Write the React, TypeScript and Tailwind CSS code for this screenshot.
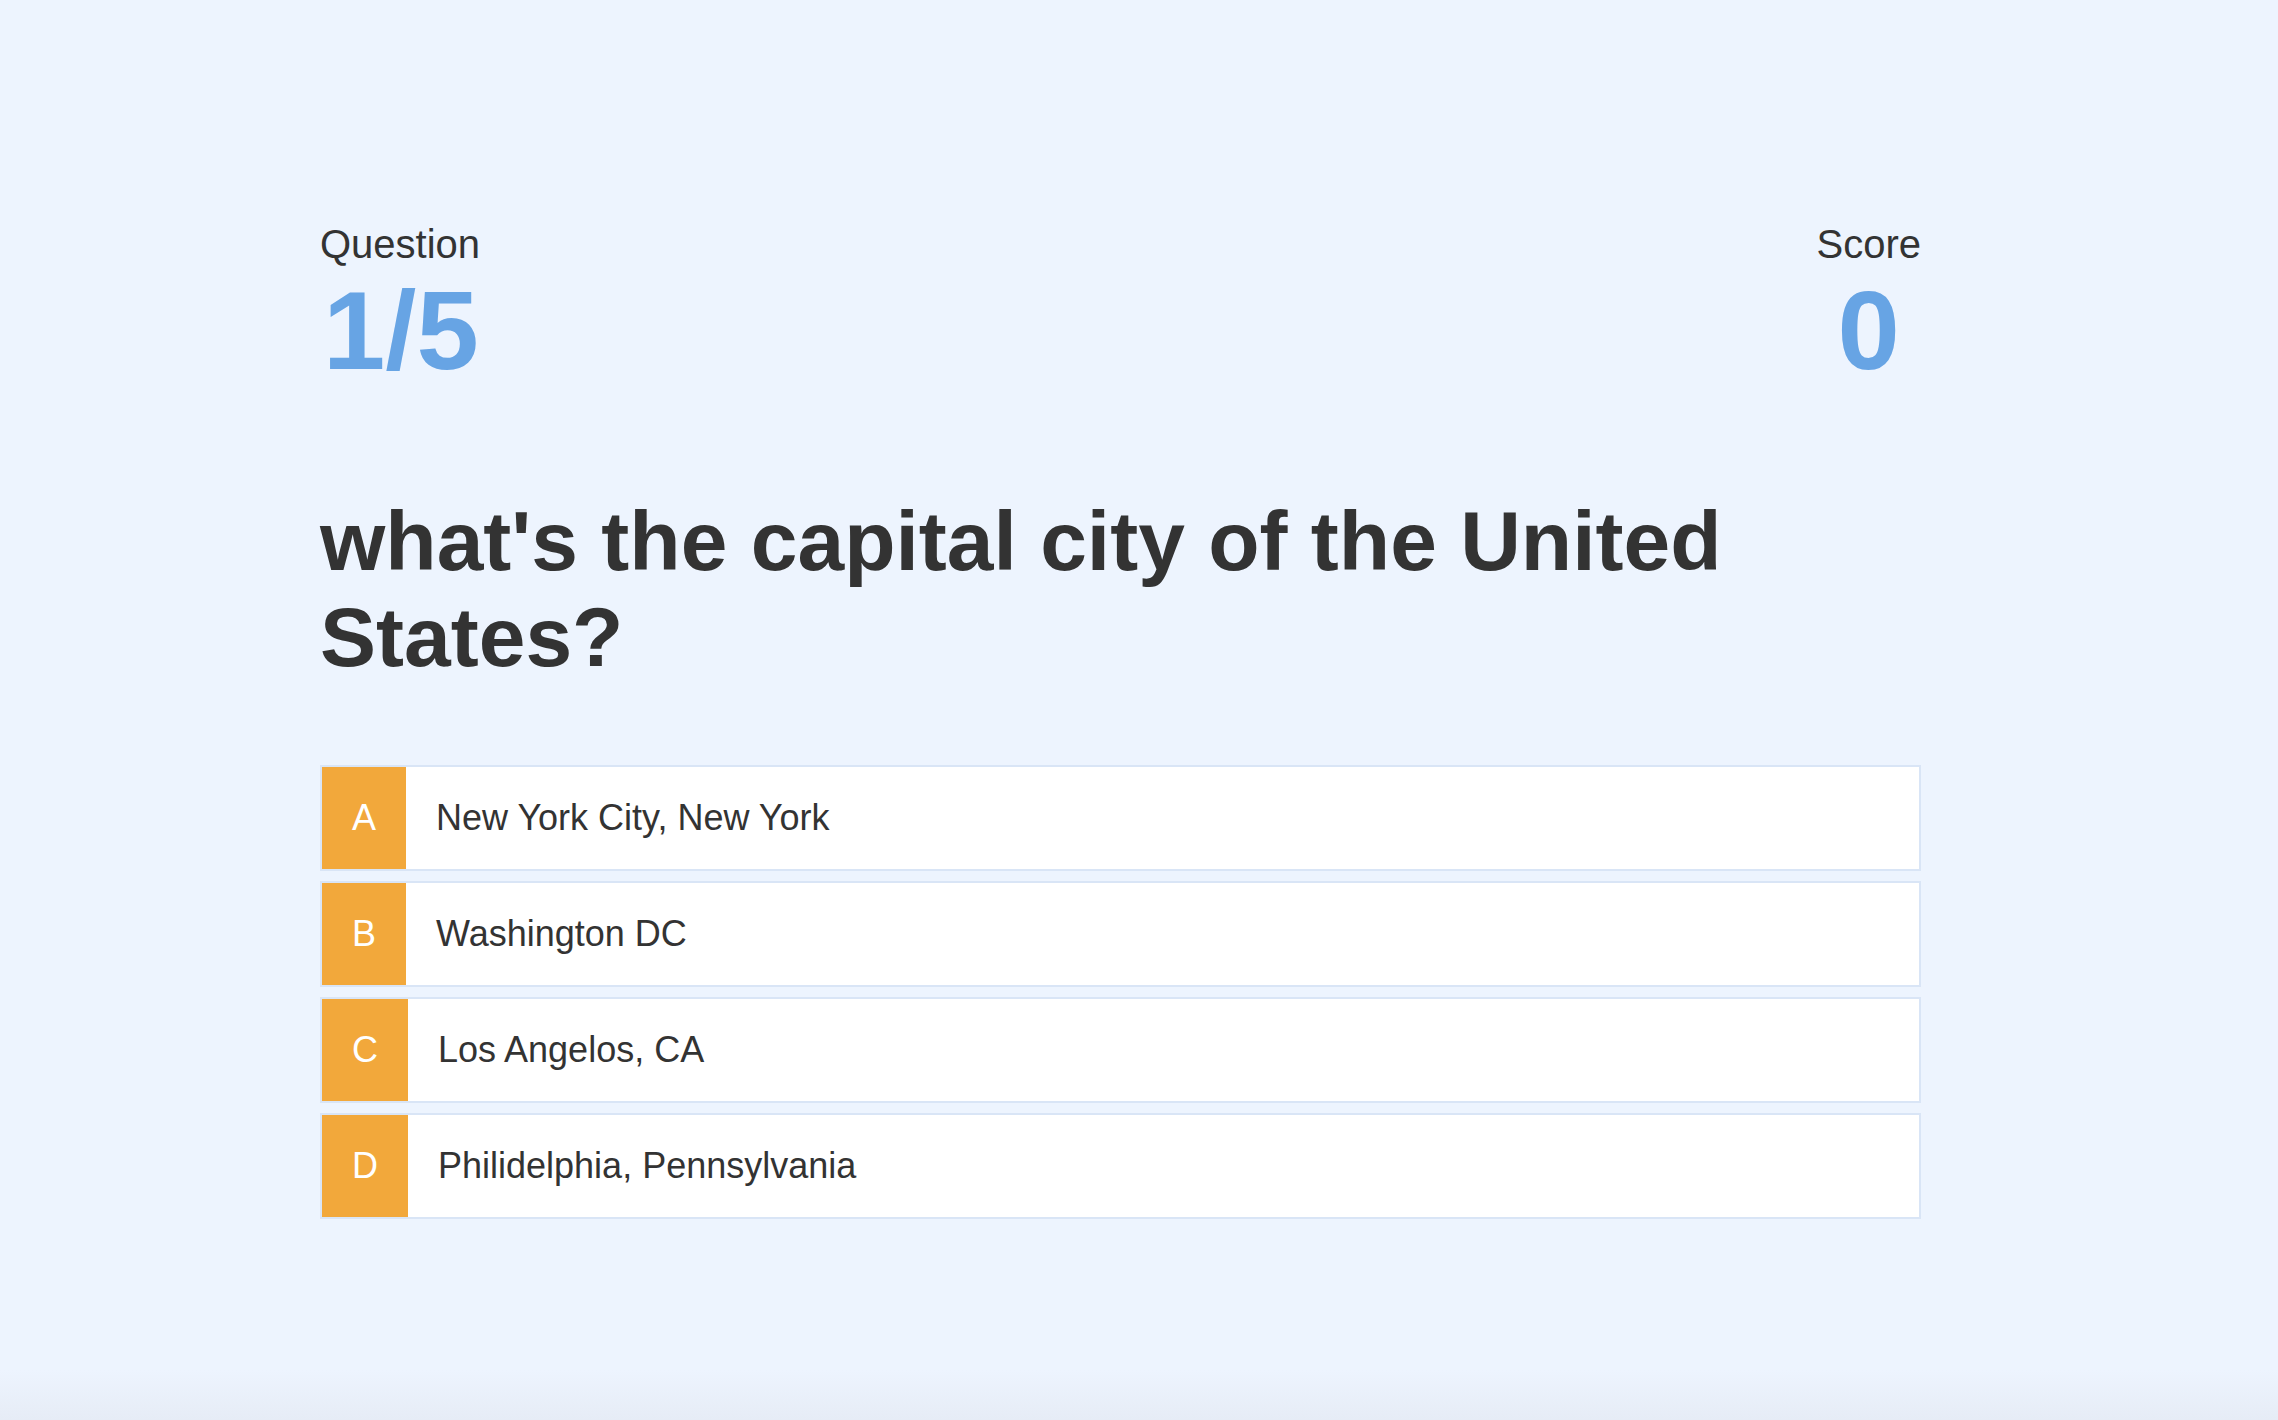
import React from "react";

const answers = [
  { letter: "A", text: "New York City, New York" },
  { letter: "B", text: "Washington DC" },
  { letter: "C", text: "Los Angelos, CA" },
  { letter: "D", text: "Philidelphia, Pennsylvania" },
];

export default function App() {
  return (
    <div
      className="min-h-[1420px] w-full bg-[linear-gradient(to_bottom,#edf4fe_0%,#edf4fe_calc(100%-50px),#e6ecf6_100%)] text-[#333333]"
      style={{ fontFamily: '"Liberation Sans", Arial, sans-serif' }}
    >
      <div className="ml-[320px] w-[1601px] pt-[221px]">
        <div className="flex items-start justify-between">
          <div className="flex flex-col">
            <div className="text-[40px] leading-[46px]">Question</div>
            <div className="pl-[3px] text-[112px] font-bold leading-[128px] text-[#67a4e4]">1/5</div>
          </div>
          <div className="flex flex-col items-center">
            <div className="text-[40px] leading-[46px]">Score</div>
            <div className="text-[112px] font-bold leading-[128px] text-[#67a4e4]">0</div>
          </div>
        </div>

        <h2 className="mt-[98px] text-[84px] font-bold leading-[96px]">
          what's the capital city of the United States?
        </h2>

        <div className="mt-[80px] flex flex-col gap-[10px]">
          {answers.map((a) => (
            <div
              key={a.letter}
              className="flex border-2 border-[#d9e5f6] bg-white text-[36px] leading-[42px]"
            >
              <div className="bg-[#f2a83b] p-[30px] text-white">{a.letter}</div>
              <div className="p-[30px]">{a.text}</div>
            </div>
          ))}
        </div>
      </div>
    </div>
  );
}
